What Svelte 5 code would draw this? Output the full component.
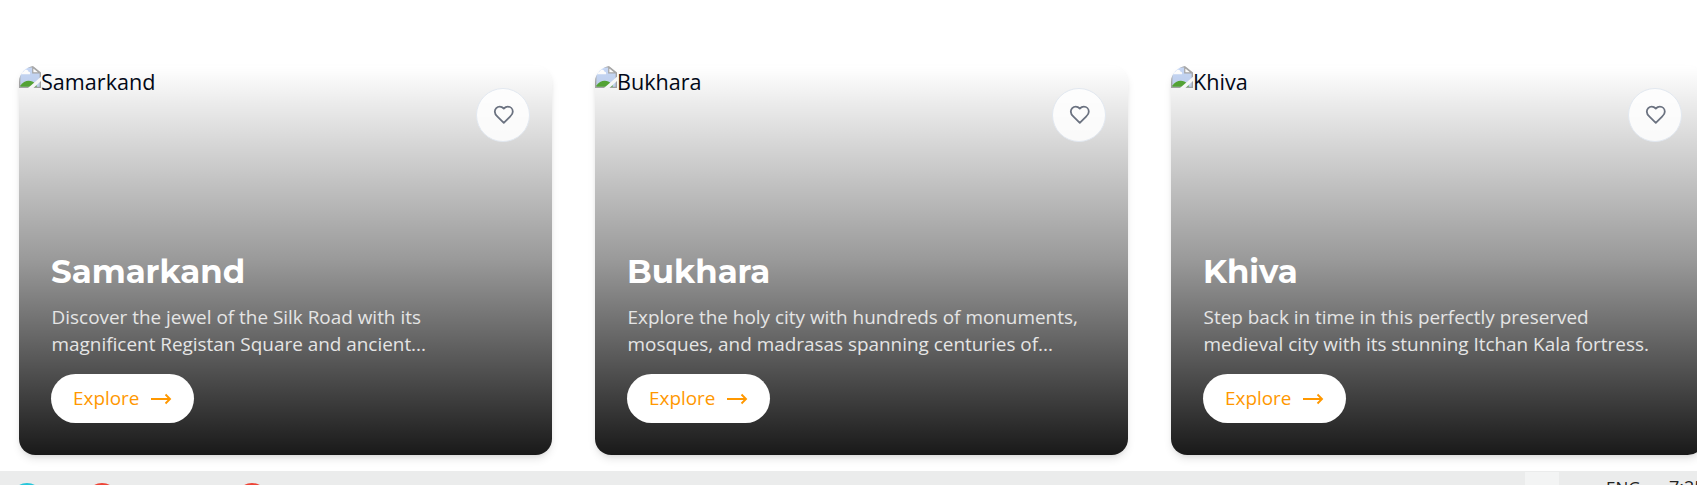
<script>
  const places = [
    { name: 'Samarkand', lines: ['Discover the jewel of the Silk Road with its', 'magnificent Registan Square and ancient...'] },
    { name: 'Bukhara', lines: ['Explore the holy city with hundreds of monuments,', 'mosques, and madrasas spanning centuries of...'] },
    { name: 'Khiva', lines: ['Step back in time in this perfectly preserved', 'medieval city with its stunning Itchan Kala fortress.'] }
  ];
</script>

<div class="page">
  <main class="cards">
    {#each places as place}
      <article class="card">
        <div class="media">
          <svg class="missing" viewBox="0 0 16 16">
            <path d="M.5 .5h9.500l5.500 4.500v10.500H.5z" fill="#c6d7f5" stroke="#a8a8a8" />
            <path d="M1.500 6c-.3-1.400 1-2.200 1.900-1.900.5-1.900 3.200-1.700 3.500 0 1.200-.1 1.500 1.400 1 1.900z" fill="#fff" />
            <path d="M1 15v-.8C2.500 12 4.800 10.700 7 10.700s4.200 1 5.500 2.800L13 15z" fill="#56a836" />
            <path d="M10 1v4h5z" fill="#fff" stroke="#a8a8a8" stroke-width=".9" />
            <path d="M6.500 16L16 7.800v3.100L10.500 16z" fill="#fff" />
          </svg>
          <span>{place.name}</span>
        </div>
        <div class="overlay">
          <button class="like" aria-label="Like">
            <svg viewBox="0 0 24 24" fill="none" stroke="currentColor" stroke-width="2" stroke-linecap="round" stroke-linejoin="round">
              <path d="M19 14c1.490-1.460 3-3.210 3-5.500A5.500 5.500 0 0 0 16.500 3c-1.760 0-3 .5-4.500 2-1.500-1.500-2.740-2-4.500-2A5.500 5.500 0 0 0 2 8.500c0 2.300 1.500 4.050 3 5.500l7 7Z" />
            </svg>
          </button>
          <div class="body">
            <h3>{place.name}</h3>
            <p>{place.lines[0]}<br />{place.lines[1]}</p>
            <button class="explore">
              <span>Explore</span>
              <svg viewBox="0 0 22 14" fill="none" stroke="currentColor" stroke-width="1.900">
                <path d="M1 7h19M15.500 2.500L20 7l-4.500 4.500" />
              </svg>
            </button>
          </div>
        </div>
      </article>
    {/each}
  </main>
  <footer class="taskbar">
    <span class="dot cyan"></span>
    <span class="dot"></span>
    <span class="dot last"></span>
    <span class="tile"></span>
    <span class="lang">ENG</span>
    <span class="time">7:25</span>
  </footer>
</div>

<style>
  .page {
    width: 1697px;
    height: 485px;
    overflow: hidden;
    display: flex;
    flex-direction: column;
    background: #fff;
    font-family: "Open Sans", "Noto Sans", sans-serif;
  }
  .cards {
    flex: none;
    height: 405px;
    padding: 66px 0 0 19px;
    display: flex;
    gap: 43px;
    width: 1800px;
    box-sizing: content-box;
  }
  .card {
    flex: none;
    width: 533px;
    height: 389px;
    display: grid;
    border-radius: 16.200px;
    overflow: hidden;
    box-shadow: 0 5px 8px -1px rgba(0, 0, 0, 0.1), 0 2px 5px -2px rgba(0, 0, 0, 0.1);
  }
  .media, .overlay { grid-area: 1 / 1; }
  .media {
    display: flex;
    align-items: flex-start;
    font-size: 21.600px;
    line-height: 32px;
    color: #020817;
  }
  .missing { width: 22px; height: 22px; flex: none; }
  .overlay {
    display: flex;
    flex-direction: column;
    justify-content: space-between;
    background: linear-gradient(to top, rgba(0, 0, 0, 0.9), rgba(0, 0, 0, 0.4) 50%, transparent);
  }
  button { font: inherit; padding: 0; box-sizing: border-box; display: flex; align-items: center; }
  .like {
    width: 54px;
    height: 54px;
    margin: 22px 22px 0 0;
    align-self: flex-end;
    justify-content: center;
    border: 1px solid #e2e8f0;
    border-radius: 50%;
    background: rgba(255, 255, 255, 0.86);
    color: #6b7280;
  }
  .like svg { width: 21.600px; height: 21.600px; margin-left: 1px; }
  .body { padding: 0 32px 32px; }
  h3 {
    margin: 0 0 11px;
    font: 700 32.400px/43px Montserrat, Inter, sans-serif;
    color: #fff;
  }
  p {
    margin: 0 0 16px;
    padding-left: 0.600px;
    font-size: 18.920px;
    line-height: 27px;
    color: #e5e5e5;
    white-space: nowrap;
  }
  .explore {
    width: 143px;
    height: 49px;
    padding-left: 22px;
    gap: 10.500px;
    border: 0;
    border-radius: 25px;
    background: #fff;
    color: #ff9800;
    font-size: 18.920px;
  }
  .explore span { padding-bottom: 2px; }
  .explore svg { width: 22px; height: 14px; }
  .taskbar {
    flex: 1;
    display: flex;
    align-items: flex-start;
    background: #ebecec;
    overflow: hidden;
    font-size: 18px;
    line-height: 20px;
    color: #222;
  }
  .dot {
    width: 32px;
    height: 32px;
    flex: none;
    margin: 12px 0 0 11px;
    border-radius: 50%;
    background: #ed4436;
  }
  .dot + .dot { margin-left: 43px; }
  .dot.last { margin-left: 118px; }
  .cyan { background: #26c6da; }
  .tile { width: 34px; height: 14px; margin: 1px 0 0 auto; background: #f3f4f4; }
  .lang { width: 63px; margin: 7px 0 0 47px; font-size: 17px; }
  .time { width: 28px; margin-top: 6px; white-space: nowrap; }
</style>
